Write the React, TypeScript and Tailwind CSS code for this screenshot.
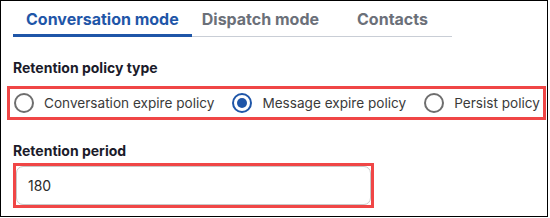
import React from 'react';

const font = { fontFamily: 'Inter, "Noto Sans", sans-serif' };

function Radio({ label, checked }: { label: string; checked?: boolean }) {
  return (
    <label className="flex shrink-0 items-center gap-[10px] whitespace-nowrap">
      <span
        className={
          checked
            ? 'flex h-[20px] w-[20px] items-center justify-center rounded-full border-2 border-[#1f56a8]'
            : 'h-[20px] w-[20px] rounded-full border-2 border-[#6e6e6e]'
        }
      >
        {checked && <span className="h-[10px] w-[10px] rounded-full bg-[#1f56a8]" />}
      </span>
      <span className="text-[13.6px] text-[#3a3a3a]">{label}</span>
    </label>
  );
}

export default function App() {
  return (
    <div className="h-[218px] w-[550px] bg-white" style={font}>
      <div className="h-[217px] w-[548px] border border-black">
        {/* Tabs */}
        <div className="ml-[12px] flex h-[36px] w-[439px] border-b border-[#c9ced6]">
          <div className="-mb-px whitespace-nowrap border-b-[3px] border-[#1f56a8] px-[13px] pt-[6px] text-[16px] font-bold text-[#1f56a8]">
            Conversation mode
          </div>
          <div className="whitespace-nowrap pl-[10px] pr-[12px] pt-[6px] text-[16px] font-bold text-[#6b7079]">Dispatch mode</div>
          <div className="ml-[14px] whitespace-nowrap px-[12px] pt-[6px] text-[16px] font-bold text-[#6b7079]">Contacts</div>
        </div>

        {/* Retention policy type */}
        <div className="ml-[12px] mt-[20px] text-[14px] font-bold text-[#1b1b2a]">Retention policy type</div>
        <div className="ml-[6px] mt-[8px] flex h-[34px] w-[539px] items-center gap-[18px] overflow-hidden border-[3px] border-[#f04646] pl-[4px]">
          <Radio label="Conversation expire policy" />
          <Radio label="Message expire policy" checked />
          <Radio label="Persist policy" />
        </div>

        {/* Retention period */}
        <div className="ml-[12px] mt-[20px] text-[14px] font-bold text-[#1b1b2a]">Retention period</div>
        <div className="ml-[12px] mt-[2px] h-[45px] w-[361px] border-[3px] border-[#f04646]">
          <div className="flex h-full items-center rounded-[7px] border border-[#c8c8c8] px-[11px] text-[14px] text-[#2a2a2a]">
            180
          </div>
        </div>
      </div>
    </div>
  );
}
